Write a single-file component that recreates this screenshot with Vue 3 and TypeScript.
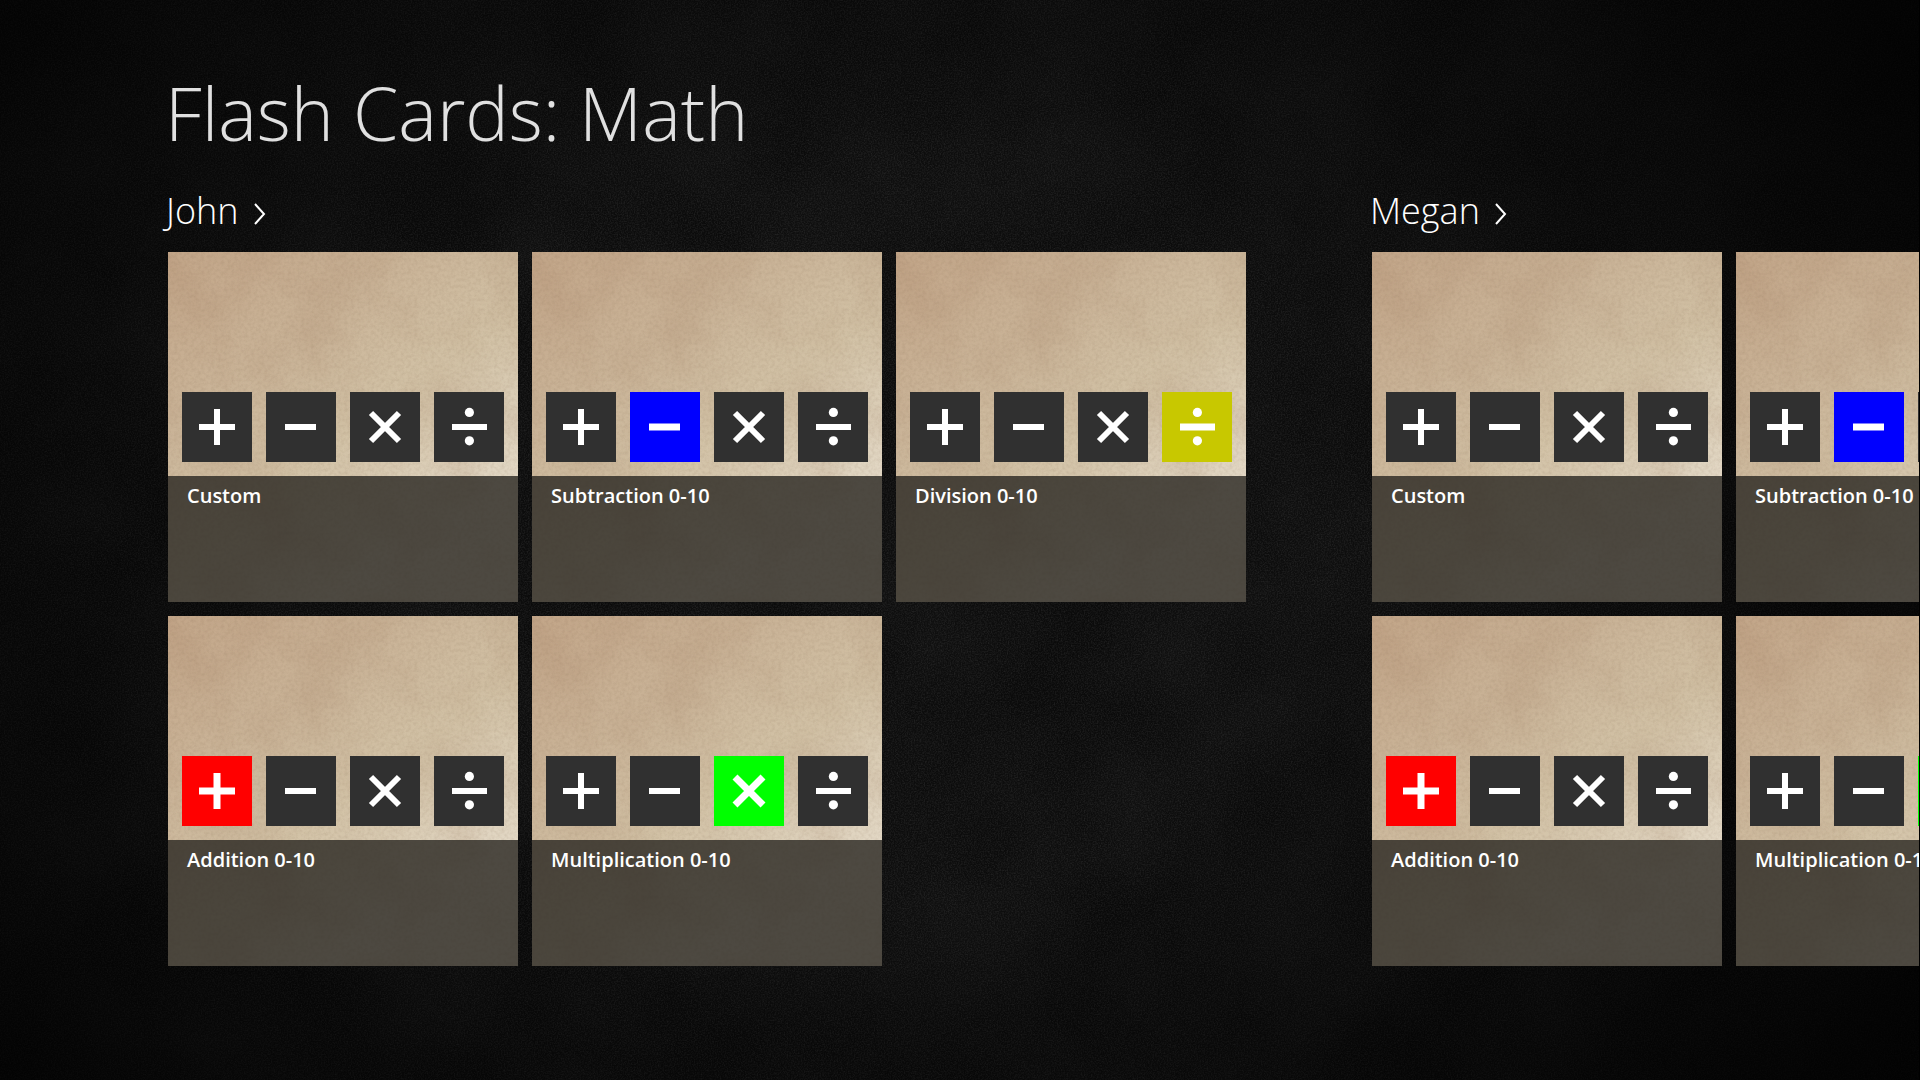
<script setup lang="ts">
type Operator = 'plus' | 'minus' | 'times' | 'divide'

interface Deck {
  title: string
  active?: Operator
}

interface Student {
  name: string
  decks: Deck[]
}

const operators: Operator[] = ['plus', 'minus', 'times', 'divide']

const shapes: Record<Operator, string> = {
  plus: 'M17 35H53M35 17V53',
  minus: 'M19 35H50',
  times: 'M21 21L49 49M49 21L21 49',
  divide: 'M18 35H53',
}

const decks: Deck[] = [
  { title: 'Custom' },
  { title: 'Addition 0-10', active: 'plus' },
  { title: 'Subtraction 0-10', active: 'minus' },
  { title: 'Multiplication 0-10', active: 'times' },
  { title: 'Division 0-10', active: 'divide' },
]

const students: Student[] = [
  { name: 'John', decks },
  { name: 'Megan', decks },
]
</script>

<template>
  <main class="page">
    <svg class="page-grain" aria-hidden="true">
      <defs>
        <filter id="slate" x="0" y="0" width="100%" height="100%" color-interpolation-filters="sRGB">
          <feTurbulence type="fractalNoise" baseFrequency="0.7" numOctaves="2" seed="4" result="fine" />
          <feColorMatrix in="fine" values="0 0 0 0 1  0 0 0 0 1  0 0 0 0 1  0.16 0 0 0 -0.06" result="specks" />
          <feTurbulence type="fractalNoise" baseFrequency="0.008" numOctaves="4" seed="9" result="wide" />
          <feColorMatrix in="wide" values="0 0 0 0 1  0 0 0 0 1  0 0 0 0 1  0.04 0 0 0 -0.008" result="clouds" />
          <feMerge>
            <feMergeNode in="clouds" />
            <feMergeNode in="specks" />
          </feMerge>
        </filter>
        <filter id="paper" x="0" y="0" width="100%" height="100%" color-interpolation-filters="sRGB">
          <feTurbulence type="fractalNoise" baseFrequency="0.3" numOctaves="3" seed="2" result="fine" />
          <feColorMatrix in="fine" values="0 0 0 0 0.45  0 0 0 0 0.35  0 0 0 0 0.25  0.22 0 0 0 -0.08" result="fibres" />
          <feTurbulence type="fractalNoise" baseFrequency="0.016" numOctaves="4" seed="12" result="wide" />
          <feColorMatrix in="wide" values="0 0 0 0 0.6  0 0 0 0 0.45  0 0 0 0 0.34  0.3 0 0 0 -0.12" result="stains" />
          <feMerge>
            <feMergeNode in="stains" />
            <feMergeNode in="fibres" />
          </feMerge>
        </filter>
      </defs>
      <rect width="100%" height="100%" filter="url(#slate)" />
    </svg>
    <div class="vignette"></div>

    <div class="content">
      <h1 class="title">Flash Cards: Math</h1>
      <div class="hub">
        <section v-for="student in students" :key="student.name" class="group">
          <h2 class="group-heading">
            <button type="button" class="group-link">
              <span>{{ student.name }}</span>
              <svg class="chevron" viewBox="0 0 12 22" aria-hidden="true"><path d="M1 1L10 11L1 21" /></svg>
            </button>
          </h2>
          <div class="tiles">
            <button v-for="deck in student.decks" :key="deck.title" type="button" class="tile">
              <svg class="tile-grain" aria-hidden="true">
                <rect width="100%" height="100%" filter="url(#paper)" />
              </svg>
              <span class="operators">
                <span
                  v-for="op in operators"
                  :key="op"
                  class="operator"
                  :class="deck.active === op ? ['active', op] : []"
                >
                  <svg viewBox="0 0 70 70" aria-hidden="true">
                    <path :d="shapes[op]" />
                    <template v-if="op === 'divide'">
                      <circle cx="35.4" cy="20.4" r="4.6" />
                      <circle cx="35.4" cy="48.8" r="4.6" />
                    </template>
                  </svg>
                </span>
              </span>
              <span class="caption">{{ deck.title }}</span>
            </button>
          </div>
        </section>
      </div>
    </div>
  </main>
</template>

<style>
body {
  margin: 0;
  background: #000;
}
</style>

<style scoped>
.page {
  position: relative;
  min-height: 100vh;
  box-sizing: border-box;
  overflow: hidden;
  border-right: 1px solid #000;
  background: #0b0b0b;
  color: #fff;
  font-family: "Open Sans", "Noto Sans", sans-serif;
}

.page-grain,
.vignette {
  position: absolute;
  inset: 0;
  width: 100%;
  height: 100%;
}

.vignette {
  background: radial-gradient(ellipse 62% 85% at 46% 48%, transparent 40%, rgba(0, 0, 0, 0.8) 100%);
}

.content {
  position: relative;
  padding: 58px 0 0 168px;
}

.title {
  margin: 0 0 0 -3px;
  color: #e0e0e0;
  font-size: 73px;
  font-weight: 300;
  line-height: 110px;
  white-space: nowrap;
}

.hub {
  display: flex;
  gap: 126px;
}

.group {
  flex: none;
}

.group-heading {
  box-sizing: border-box;
  margin: 0 0 0 -2px;
  height: 84px;
  padding-top: 2px;
  display: flex;
  align-items: center;
}

.group-link {
  display: flex;
  align-items: center;
  gap: 15px;
  padding: 0;
  border: 0;
  background: none;
  color: inherit;
  font: 300 36px/48px "Open Sans", "Noto Sans", sans-serif;
}

.chevron {
  width: 12px;
  height: 22px;
  padding-top: 6px;
  fill: none;
  stroke: #fff;
  stroke-width: 2;
}

.tiles {
  display: grid;
  grid-auto-flow: column;
  grid-template-rows: repeat(2, 350px);
  grid-auto-columns: 350px;
  gap: 14px;
}

.tile {
  position: relative;
  display: flex;
  flex-direction: column;
  justify-content: flex-end;
  padding: 0;
  border: 0;
  background: linear-gradient(145deg, #c2a588 0%, #cab498 30%, #d2c2a6 52%, #e2d7c4 78%);
  color: #fff;
  text-align: left;
}

.tile-grain {
  position: absolute;
  inset: 0;
  width: 100%;
  height: 100%;
}

.operators {
  position: relative;
  display: flex;
  gap: 14px;
  padding: 14px;
}

.operator {
  width: 70px;
  height: 70px;
  background: #303030;
}

.operator svg {
  display: block;
  fill: #fff;
  stroke-width: 0;
}

.operator path {
  fill: none;
  stroke: #fff;
  stroke-width: 6;
}

.operator.active path {
  stroke-width: 7;
}

.operator.plus {
  background: #f00;
}

.operator.minus {
  background: #00f;
}

.operator.times {
  background: #0f0;
}

.operator.divide {
  background: #c8c800;
}

.caption {
  position: relative;
  box-sizing: border-box;
  height: 126px;
  padding: 6px 19px;
  background: rgba(40, 37, 32, 0.8);
  font: 600 20px/28px "Open Sans", "Noto Sans", sans-serif;
  white-space: nowrap;
}
</style>
